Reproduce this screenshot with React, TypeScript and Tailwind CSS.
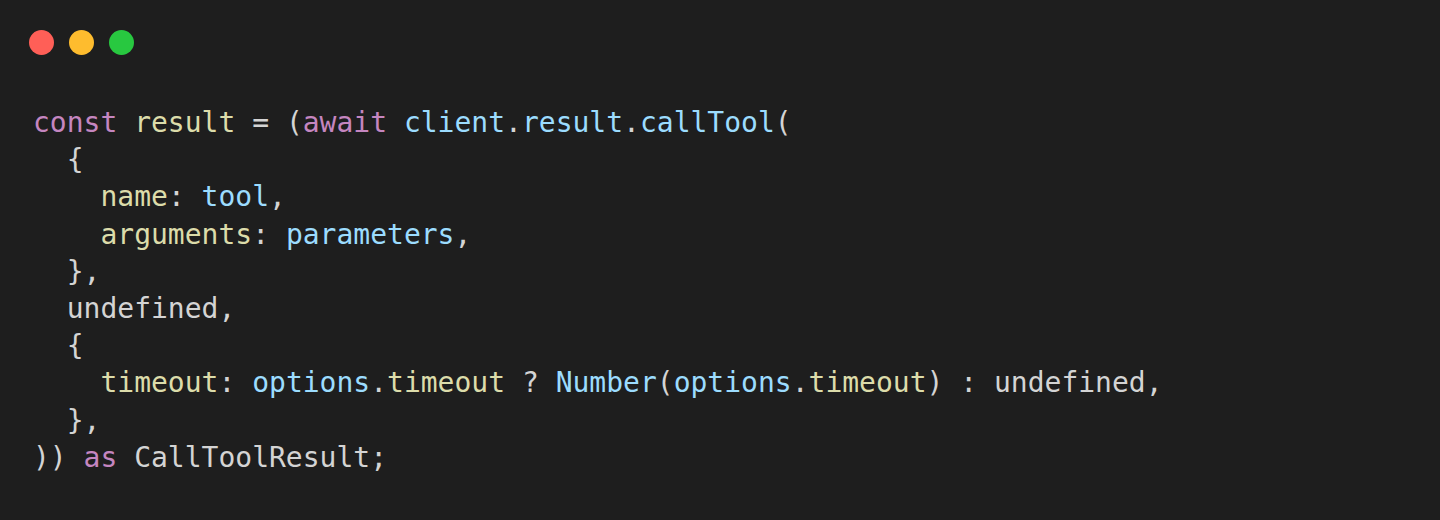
const K = "text-[#c586c0]";
const F = "text-[#dcdcaa]";
const V = "text-[#9cdcfe]";

type Tok = [string, string?];

const lines: Tok[][] = [
  [["const", K], [" "], ["result", F], [" = ("], ["await", K], [" "], ["client", V], ["."], ["result", V], ["."], ["callTool", V], ["("]],
  [["  {"]],
  [["    "], ["name", F], [": "], ["tool", V], [","]],
  [["    "], ["arguments", F], [": "], ["parameters", V], [","]],
  [["  },"]],
  [["  undefined,"]],
  [["  {"]],
  [["    "], ["timeout", F], [": "], ["options", V], ["."], ["timeout", F], [" ? "], ["Number", V], ["("], ["options", V], ["."], ["timeout", F], [") : undefined,"]],
  [["  },"]],
  [["))"], [" "], ["as", K], [" CallToolResult;"]],
];

export default function App() {
  return (
    <div className="w-full h-[520px] bg-[#1e1e1e] pt-[30px] pl-[29px] overflow-hidden">
      <div className="flex gap-[15px]">
        <span className="w-[25px] h-[25px] rounded-full bg-[#ff5f57]" />
        <span className="w-[25px] h-[25px] rounded-full bg-[#febc2e]" />
        <span className="w-[25px] h-[25px] rounded-full bg-[#28c840]" />
      </div>
      <pre
        className="mt-[49px] pl-[4px] text-[#d4d4d4] text-[28px] leading-[37.2px]"
        style={{ fontFamily: '"DejaVu Sans Mono", monospace' }}
      >
        {lines.map((line, i) => (
          <div key={i}>
            {line.map(([t, c], j) => (
              <span key={j} className={c}>
                {t}
              </span>
            ))}
          </div>
        ))}
      </pre>
    </div>
  );
}
